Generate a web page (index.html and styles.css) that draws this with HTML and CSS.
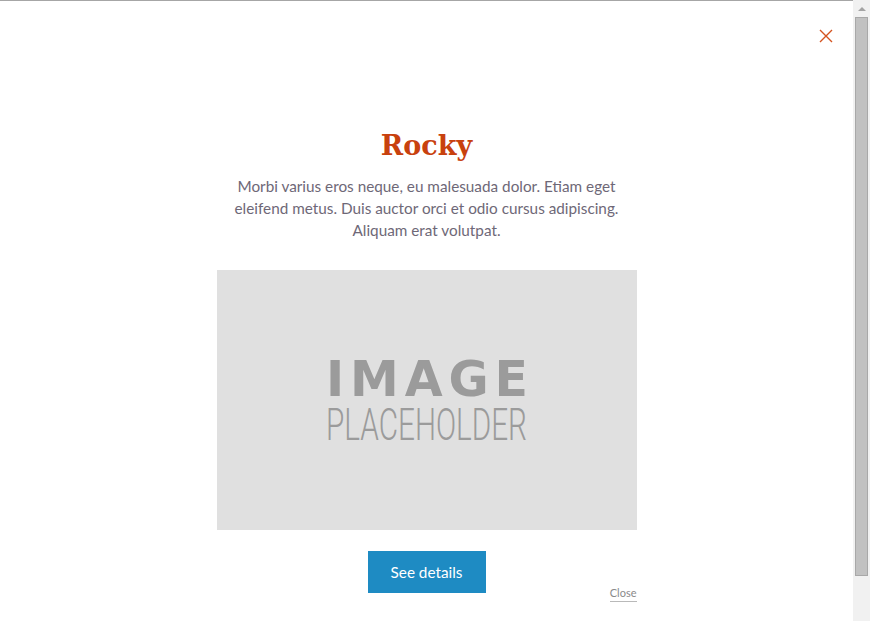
FILE: index.html
```html
<!DOCTYPE html>
<html>
<head>
<meta charset="utf-8">
<link rel="stylesheet" href="styles.css">
</head>
<body>
<div class="page">
  <main class="modal">
    <button class="close-x" aria-label="Close">
      <svg width="14" height="14" viewBox="0 0 14 14"><path d="M1 1L13 13M13 1L1 13" stroke="#d4531f" stroke-width="1.4" fill="none"/></svg>
    </button>
    <div class="content">
      <h1 class="title">Rocky</h1>
      <p class="desc">Morbi varius eros neque, eu malesuada dolor. Etiam eget<br>eleifend metus. Duis auctor orci et odio cursus adipiscing.<br>Aliquam erat volutpat.</p>
      <div class="image">
        <svg width="420" height="260" viewBox="0 0 420 260">
          <rect width="420" height="260" fill="#e0e0e0"/>
          <text x="109" y="126" textLength="202" lengthAdjust="spacing" class="ph-big">IMAGE</text>
          <text x="109" y="170" textLength="201" lengthAdjust="spacingAndGlyphs" class="ph-small">PLACEHOLDER</text>
        </svg>
      </div>
      <div class="actions">
        <a class="btn" href="#">See details</a>
        <a class="close-link" href="#">Close</a>
      </div>
    </div>
  </main>
  <div class="scrollbar">
    <div class="arrow"></div>
    <div class="thumb"></div>
  </div>
</div>
</body>
</html>
```
FILE: styles.css
```css
html, body {
  margin: 0;
  padding: 0;
  height: 100%;
  overflow: hidden;
  background: #fff;
}
.page {
  display: flex;
  height: 621px;
}
.modal {
  flex: 1;
  position: relative;
  border-top: 1px solid #a6a6a6;
}
.close-x {
  position: absolute;
  top: 28px;
  right: 20px;
  padding: 0;
  border: 0;
  background: none;
  width: 14px;
  height: 14px;
  line-height: 0;
}
.content {
  width: 420px;
  margin: 0 auto;
  padding-top: 125px;
  display: flex;
  flex-direction: column;
  align-items: center;
}
.title {
  margin: 0;
  font-family: "DejaVu Serif", serif;
  font-weight: bold;
  font-size: 27px;
  line-height: 40px;
  color: #c8410e;
}
.desc {
  margin: 9px 0 0;
  width: 440px;
  font-family: Lato, "Open Sans", sans-serif;
  font-size: 15.3px;
  line-height: 22px;
  color: #6e6877;
  text-align: center;
}
.image {
  margin-top: 29px;
  width: 420px;
  height: 260px;
  line-height: 0;
}
.ph-big {
  font-family: "DejaVu Sans", sans-serif;
  font-weight: bold;
  font-size: 49px;
  fill: #9b9b9b;
}
.ph-small {
  font-family: Roboto, "DejaVu Sans", sans-serif;
  font-weight: 300;
  font-size: 44px;
  fill: #9b9b9b;
}
.actions {
  margin-top: 21px;
  width: 420px;
  display: grid;
  grid-template-columns: 1fr auto 1fr;
}
.btn {
  grid-column: 2;
  display: block;
  width: 118px;
  height: 42px;
  line-height: 42px;
  text-align: center;
  background: #1e8bc3;
  color: #fff;
  text-decoration: none;
  font-family: Lato, "Open Sans", sans-serif;
  font-size: 15.3px;
}
.close-link {
  grid-column: 3;
  justify-self: end;
  align-self: start;
  margin-top: 35px;
  font-family: Lato, "Open Sans", sans-serif;
  font-size: 11px;
  line-height: 13px;
  color: #8a8a8a;
  text-decoration: none;
  border-bottom: 1px solid #b9b9b9;
  padding-bottom: 2px;
}
.scrollbar {
  width: 17px;
  background: #f1f1f1;
  display: flex;
  flex-direction: column;
  align-items: center;
}
.arrow {
  margin-top: 7px;
  width: 0;
  height: 0;
  border-left: 4px solid transparent;
  border-right: 4px solid transparent;
  border-bottom: 4px solid #a3a3a3;
}
.thumb {
  margin-top: 6px;
  width: 11px;
  height: 557px;
  background: #c1c1c1;
  border: 1px solid #a8a8a8;
}
```
